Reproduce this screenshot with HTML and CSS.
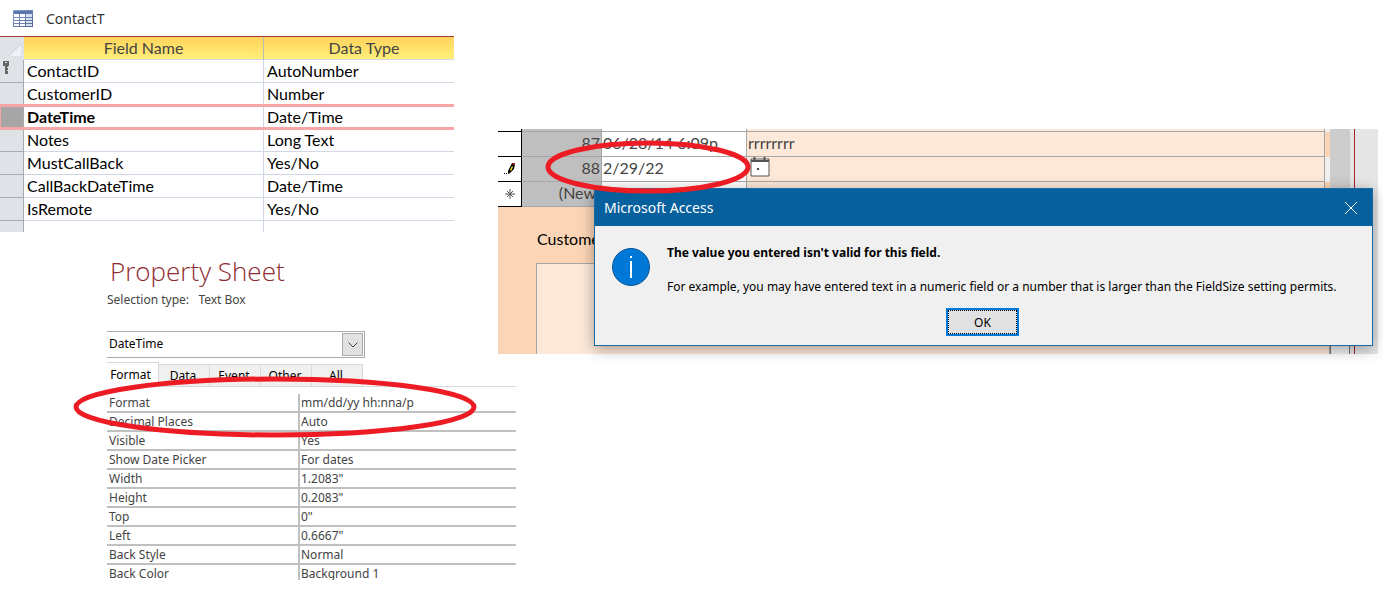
FILE: index.html
```html
<!DOCTYPE html>
<html lang="en">
<head>
  <meta charset="UTF-8" />
  <meta name="viewport" content="width=device-width, initial-scale=1.0"/>
  <title>ContactT</title>
  <link rel="stylesheet" href="styles.css">
</head>
<body>
  <div class="page">
    <div class="left">
      <section class="design">
        <h2 class="table-tab">
          <svg width="20" height="17" viewBox="0 0 20 17">
            <defs>
              <linearGradient id="gridFill" x1="0" y1="0" x2="1" y2="1">
                <stop offset="0" stop-color="#8ea5cc"/>
                <stop offset="1" stop-color="#4d6291"/>
              </linearGradient>
            </defs>
            <rect width="20" height="17" fill="url(#gridFill)"/>
            <path fill="#5b77ad" d="M1 1h18v3H1z"/>
            <path fill="#fff" d="M1 4h5v3H1zM7 4h5v3H7zM1 8h5v2H1zM7 8h5v2H7zM1 11h5v2H1zM7 11h5v2H7zM1 14h5v2H1zM7 14h5v2H7z"/>
            <path fill="#d5dff2" d="M13 4h6v3h-6zM13 8h6v2h-6zM13 11h6v2h-6zM13 14h6v2h-6z"/>
          </svg>
          <span>ContactT</span>
        </h2>
        <table class="fields">
          <colgroup><col class="col-sel"><col class="col-name"><col></colgroup>
          <thead>
            <tr>
              <th class="sel"><svg class="corner" width="12" height="12" viewBox="0 0 12 12"><path d="M12 0v12H0z" fill="#eef1f5"/><path d="M0 12L12 0" stroke="#c5d0e2"/></svg></th>
              <th>Field Name</th>
              <th>Data Type</th>
            </tr>
          </thead>
          <tbody>
            <tr>
              <td class="sel"><svg class="key" width="8" height="14" viewBox="0 0 8 14"><path fill="#666" fill-rule="evenodd" d="M0 0h6v5H5v8H2V5H0zM2 1v1h2V1zM4 6h1v1H4zM4 9h1v1H4z"/></svg></td>
              <td>ContactID</td><td>AutoNumber</td>
            </tr>
            <tr><td class="sel"></td><td>CustomerID</td><td>Number</td></tr>
            <tr class="current"><td class="sel"></td><td>DateTime</td><td>Date/Time</td></tr>
            <tr><td class="sel"></td><td>Notes</td><td>Long Text</td></tr>
            <tr><td class="sel"></td><td>MustCallBack</td><td>Yes/No</td></tr>
            <tr><td class="sel"></td><td>CallBackDateTime</td><td>Date/Time</td></tr>
            <tr><td class="sel"></td><td>IsRemote</td><td>Yes/No</td></tr>
            <tr class="last"><td class="sel"></td><td></td><td></td></tr>
          </tbody>
        </table>
      </section>

      <section class="sheet">
        <h1>Property Sheet</h1>
        <label class="sel-type" for="control">Selection type: &nbsp;&nbsp;Text Box</label>
        <div class="combo">
          <select id="control"><option>DateTime</option></select>
          <span class="combo-arrow"><svg width="10" height="6" viewBox="0 0 10 6"><path d="M.5 .5L5 5L9.500 .5" fill="none" stroke="#444"/></svg></span>
        </div>
        <div class="tabs">
          <button class="tab active">Format</button>
          <button class="tab">Data</button>
          <button class="tab">Event</button>
          <button class="tab">Other</button>
          <button class="tab">All</button>
        </div>
        <div class="props-wrap">
          <table class="props">
            <tr><th>Format</th><td>mm/dd/yy hh:nna/p</td></tr>
            <tr><th>Decimal Places</th><td>Auto</td></tr>
            <tr><th>Visible</th><td>Yes</td></tr>
            <tr><th>Show Date Picker</th><td>For dates</td></tr>
            <tr><th>Width</th><td>1.2083"</td></tr>
            <tr><th>Height</th><td>0.2083"</td></tr>
            <tr><th>Top</th><td>0"</td></tr>
            <tr><th>Left</th><td>0.6667"</td></tr>
            <tr><th>Back Style</th><td>Normal</td></tr>
            <tr><th>Back Color</th><td>Background 1</td></tr>
          </table>
        </div>
        <svg class="ring ring-format" width="404" height="64" viewBox="0 0 404 64"><ellipse cx="202" cy="32" rx="199" ry="28"/></svg>
      </section>
    </div>

    <section class="form">
      <div class="form-body">
        <div class="records">
          <div class="rec sliver"><span class="mark"></span><span class="id"></span><span class="date"></span><span class="note"></span><span class="edge light"></span></div>
          <div class="rec"><span class="mark"></span><span class="id">87</span><span class="date">06/28/14 6:09p</span><span class="note">rrrrrrrr</span><span class="edge"></span></div>
          <div class="rec">
            <span class="mark">
              <svg width="12" height="14" viewBox="0 0 12 14"><path d="M4 9l4-8 3 1-1 5-4 4-2 1z" fill="#000"/><path d="M6 8l2-4 1 1-2 4z" fill="#ffe600"/><path d="M8 1h3v2H9z" fill="#a01818"/><path d="M0 11h1v1H0zM2 11h1v1H2z"/></svg>
            </span>
            <span class="id">88</span><span class="date">2/29/22</span>
            <span class="note">
              <button class="picker" aria-label="Pick a date"><svg width="20" height="20" viewBox="0 0 20 20"><path d="M1 2h18v17H1z" fill="#fff" stroke="#555"/><path d="M1 4h18M4.500 0v4M14.500 0v4" fill="none" stroke="#555" stroke-width="2"/><path d="M7 11h2v2H7z" fill="#444"/></svg></button>
            </span>
            <span class="edge light"></span>
          </div>
          <div class="rec">
            <span class="mark"><svg width="10" height="10" viewBox="0 0 10 10"><path d="M5 0v10M0 5h10M2 2l6 6M8 2L2 8" stroke="#555" fill="none"/></svg></span>
            <span class="id">(New)</span><span class="date">__/__/__</span><span class="note"></span><span class="edge"></span>
          </div>
        </div>
        <div class="detail">
          <label class="detail-label" for="notes">Customer Notes</label>
          <textarea id="notes" class="detail-box"></textarea>
        </div>
      </div>
      <div class="scroll"><div class="scroll-end"></div></div>
      <div class="outside"></div>

      <div class="dialog" role="dialog" aria-labelledby="dlgTitle">
        <div class="dialog-title">
          <span id="dlgTitle">Microsoft Access</span>
          <button class="close" aria-label="Close"><svg width="12" height="12" viewBox="0 0 12 12"><path d="M0 0l12 12M12 0L0 12" stroke="#fff" fill="none"/></svg></button>
        </div>
        <div class="dialog-body">
          <svg class="info" width="38" height="38" viewBox="0 0 38 38"><circle cx="19" cy="19" r="18.500" fill="#0078d7" stroke="#0a5494"/><path d="M18 8h2v2h-2zM18 13h2v17h-2z" fill="#fff"/></svg>
          <div class="message">
            <p class="strong">The value you entered isn't valid for this field.</p>
            <p>For example, you may have entered text in a numeric field or a number that is larger than the FieldSize setting permits.</p>
          </div>
        </div>
        <div class="dialog-actions"><button class="ok">OK</button></div>
      </div>
      <svg class="ring ring-date" width="208" height="56" viewBox="0 0 208 56"><ellipse cx="104" cy="28" rx="100" ry="24"/></svg>
    </section>
  </div>
</body>
</html>
```
FILE: styles.css
```css
* { margin: 0; padding: 0; box-sizing: border-box; }
body {
  font-family: "Noto Sans", "Open Sans", sans-serif;
  font-size: 12px;
  background: #fff;
  color: #000;
}
button, select, textarea { font: inherit; color: inherit; }
.page {
  display: grid;
  grid-template-columns: 498px 18px 1fr;
  padding-right: 5px;
}
.left { grid-column: 1 / 3; grid-row: 1; }

/* table design view */
.design { width: 454px; }
.table-tab {
  display: flex;
  align-items: center;
  gap: 13px;
  height: 36px;
  padding-left: 13px;
  font-size: 14px;
  font-weight: normal;
  color: #333;
}
.fields {
  width: 100%;
  table-layout: fixed;
  border-collapse: separate;
  border-spacing: 0;
  border-top: 1px solid #a4373a;
  font-family: Lato, sans-serif;
  font-size: 16px;
  line-height: 22px;
}
.col-sel { width: 24px; }
.col-name { width: 240px; }
.fields th, .fields td {
  height: 23px;
  border-bottom: 1px solid #d0d7e5;
  border-right: 1px solid #d0d7e5;
}
.fields th {
  background: linear-gradient(#ffd35c, #fff07a);
  border-right-color: #bcbcae;
  font-weight: normal;
  color: #444;
}
.fields td { padding-left: 3px; }
.fields th:last-child, .fields td:last-child { border-right: none; }
.fields th:last-child { padding-left: 10px; }
.fields .sel {
  padding: 0;
  background: #dfe3e8;
  border-right-color: #a9abb0;
  border-bottom-color: #a9abb0;
  vertical-align: top;
}
.fields th.sel { border-right-color: #dfe3e8; border-bottom-color: #dfe3e8; }
.corner { display: block; margin: 7px 0 0 9px; }
.key { display: block; margin: 1px 0 0 3px; }
.fields .current { position: relative; font-weight: bold; }
.fields .current td:last-child { font-weight: normal; }
.fields .current .sel { background: #a6a6a6; }
.fields .current .sel::after {
  content: "";
  position: absolute;
  inset: -2px 0 -1px;
  border: solid #f8a5a8;
  border-width: 3px 0 3px 1px;
}
.fields .last td { height: 11px; border-bottom: none; }

/* property sheet */
.sheet {
  position: relative;
  margin: 22px 0 0 107px;
  color: #444;
}
.sheet h1 {
  padding-left: 3px;
  font-family: "Open Sans", sans-serif;
  font-size: 26px;
  font-weight: 300;
  line-height: 34px;
  color: #8f2a2f;
}
.sel-type { display: block; line-height: 24px; }
.combo {
  position: relative;
  width: 258px;
  margin-top: 19px;
}
.combo select {
  display: block;
  width: 100%;
  height: 27px;
  padding: 0 0 2px 2px;
  appearance: none;
  border: 1px solid #ababab;
  border-left: none;
  border-radius: 0;
  background: #fff;
  color: #000;
}
.combo-arrow {
  position: absolute;
  top: 2px;
  right: 2px;
  bottom: 2px;
  width: 21px;
  display: flex;
  align-items: center;
  justify-content: center;
  border: 1px solid #ababab;
  background: #e1e1e1;
  pointer-events: none;
}
.tabs {
  display: flex;
  align-items: flex-end;
  height: 25px;
  margin-top: 4px;
  box-shadow: inset 0 -1px #d9d9d9;
}
.tab {
  width: 51px;
  height: 23px;
  padding-right: 2px;
  border: 1px solid #d9d9d9;
  border-left: none;
  background: #f0f0f0;
  color: #000;
}
.tab.active {
  width: 52px;
  height: 25px;
  padding: 0 4px 1px 0;
  border-bottom: none;
  background: #fff;
}
.props-wrap {
  height: 186px;
  margin-top: 6px;
  overflow: hidden;
}
.props {
  width: 100%;
  border-spacing: 0;
  table-layout: fixed;
}
.props th, .props td {
  height: 19px;
  padding: 2px 0 0 2px;
  border-bottom: 2px solid #c0c0c0;
  font-weight: normal;
  line-height: 17px;
  text-align: left;
}
.props tr { height: 19px; }
.props th { width: 193px; border-right: 2px solid #c0c0c0; }
.props td { padding-left: 1px; }
.props th, .props td { padding-top: 1px; line-height: 16px; }
.props-wrap { margin-top: 7px; }

/* form with records */
.form {
  grid-column: 2 / 4;
  grid-row: 1;
  position: relative;
  display: flex;
  align-self: start;
  height: 225px;
  margin-top: 129px;
}
.form-body {
  flex: 1;
  display: flex;
  flex-direction: column;
  background: #fbd5b5;
}
.rec {
  display: flex;
  height: 25px;
  font-family: Lato, sans-serif;
  font-size: 16px;
  line-height: 22px;
  color: #444;
}
.rec span { border-bottom: 1px solid #a6a6a6; }
.rec .mark {
  display: flex;
  align-items: center;
  justify-content: center;
  width: 24px;
  border-right: 1px solid #000;
  border-bottom-color: #000;
  background: #fff;
}
.rec .id {
  width: 80px;
  padding-right: 1px;
  border-right: 1px solid #a6a6a6;
  background: #bfbfbf;
  text-align: right;
}
.rec .date {
  width: 145px;
  padding-left: 1px;
  border-right: 1px solid #a6a6a6;
  background: #fff;
}
.rec .note {
  flex: 1;
  padding-left: 1px;
  border-right: 1px solid #a6a6a6;
  background: #fde9d9;
}
.rec .edge { width: 5px; border-bottom: none; }
.rec .edge.light { background: #f0f0f0; }
.sliver { height: 3px; }
.picker {
  display: block;
  margin-left: 2px;
  border: none;
  background: none;
}
.detail {
  flex: 1;
  display: flex;
  flex-direction: column;
  gap: 13px;
  margin-left: 23px;
  padding: 21px 0 0 15px;
}
.detail-label {
  padding-left: 1px;
  font-family: Lato, sans-serif;
  font-size: 16px;
  line-height: 22px;
}
.detail-box {
  flex: 1;
  border: 1px solid #a6a6a6;
  border-bottom: none;
  background: #fde9d9;
  resize: none;
}
.scroll {
  display: flex;
  align-items: flex-end;
  width: 24px;
  border-right: 4px solid #e6e6e6;
  background: #cdcdcd;
}
.scroll-end {
  flex: 1;
  height: 18px;
  border: solid #777;
  border-width: 1px 1px 0;
  background: #f0f0f0;
}
.outside {
  width: 24px;
  border-left: 1px solid #a4262c;
  background: #e6e6e6;
}

/* message box over the form */
.dialog {
  position: absolute;
  top: 59px;
  left: 96px;
  right: 5px;
  border: 1px solid #1a6aa5;
  background: #f0f0f0;
  box-shadow: 0 3px 14px rgba(0, 0, 0, 0.35);
}
.dialog-title {
  display: flex;
  align-items: center;
  justify-content: space-between;
  height: 37px;
  padding: 0 15px 0 9px;
  background: #06609e;
  color: #fff;
  font-size: 14px;
}
.close {
  display: flex;
  border: none;
  background: none;
}
.dialog-body {
  display: flex;
  gap: 17px;
  padding: 18px 0 0 17px;
}
.info { margin-top: 4px; }
.message { line-height: 18px; white-space: nowrap; }
.message .strong { margin-bottom: 16px; font-weight: bold; }
.dialog-actions {
  display: flex;
  justify-content: center;
  padding: 12px 2px 9px 0;
}
.ok {
  width: 73px;
  height: 28px;
  border: 2px solid #0078d7;
  background: #e1e1e1;
  outline: 1px dotted #000;
  outline-offset: -3px;
}

/* red marker rings */
.ring {
  position: absolute;
  fill: none;
  stroke: #ed1c24;
  stroke-width: 5px;
  pointer-events: none;
}
.ring-format { top: 121px; left: -34px; }
.ring-date { top: 10px; left: 46px; }
```
